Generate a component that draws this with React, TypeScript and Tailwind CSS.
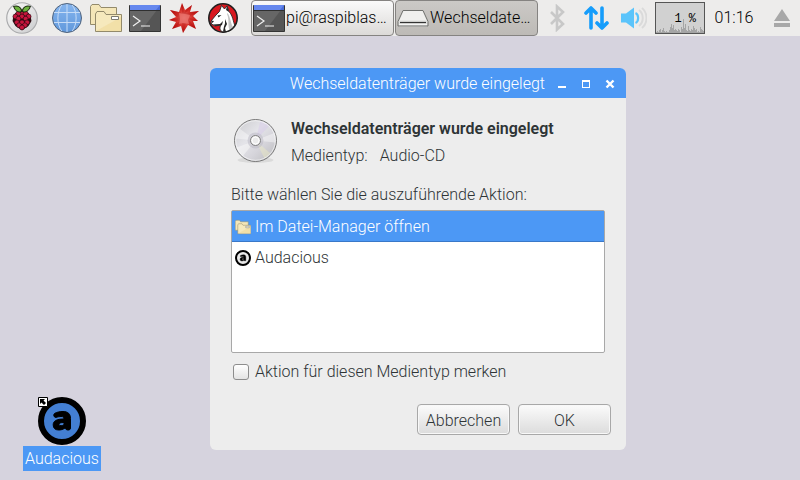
import { useState } from "react";
import type { ReactNode } from "react";

function RaspberryIcon() {
  const drupelets = [
    [22, 14], [17, 16], [27, 16], [13, 20], [22, 20], [31, 20], [17, 23], [27, 23], [15, 28], [22, 28], [29, 28], [18, 32], [26, 32], [22, 35],
  ];
  return (
    <svg viewBox="0 0 44 44" className="size-8" aria-hidden="true">
      <defs>
        <linearGradient id="menuDisc" x1="0" y1="0" x2="1" y2="1">
          <stop offset="0" stopColor="#fafafa" />
          <stop offset="0.5" stopColor="#e4e4e4" />
          <stop offset="1" stopColor="#c9cacc" />
        </linearGradient>
      </defs>
      <circle cx="22" cy="22" r="21" fill="url(#menuDisc)" stroke="#a9aaac" strokeWidth="1.6" />
      <path d="M22 13 31 15 34 20 35 26 31 33 22 39 13 33 9 26 10 20 13 15Z" fill="#2a0a10" />
      {drupelets.map(([cx, cy]) => (
        <circle key={`${cx}-${cy}`} cx={cx} cy={cy} r="3.4" fill="#c9143d" stroke="#2a0a10" strokeWidth="0.9" />
      ))}
      <path d="M21.5 13C17 15 12 12 10.500 6 15 4.500 21 6 21.500 13Z" fill="#6db33f" stroke="#1d2b12" strokeWidth="1.4" />
      <path d="M22.500 13C27 15 32 12 33.500 6 29 4.500 23 6 22.500 13Z" fill="#6db33f" stroke="#1d2b12" strokeWidth="1.4" />
    </svg>
  );
}

function GlobeIcon() {
  return (
    <svg viewBox="0 0 32 32" className="size-8" aria-hidden="true">
      <defs>
        <linearGradient id="globeFill" x1="0" y1="0" x2="0" y2="1">
          <stop offset="0" stopColor="#86b5ee" />
          <stop offset="1" stopColor="#6098dc" />
        </linearGradient>
      </defs>
      <circle cx="16" cy="16" r="14.500" fill="url(#globeFill)" />
      <path d="M2.500 10.500h27M2.500 20.500h27M16 1.500v29M11 2.500C5.500 10 5.500 22 11 29.500M21 2.500C26.500 10 26.500 22 21 29.500" fill="none" stroke="#c6dcf7" strokeWidth="1" />
      <circle cx="16" cy="16" r="14.500" fill="none" stroke="#52647c" strokeWidth="1" />
    </svg>
  );
}

function FoldersIcon({ className }: { className: string }) {
  return (
    <svg viewBox="0 0 32 32" className={className} aria-hidden="true">
      <path d="M.5 22.500V4.500L2 2.500H9L11 5.500H26.500V22.500Z" fill="#f4e6b8" stroke="#938a6b" />
      <path d="M5.500 29.500V12L7 9.500H14L16 12.500H31.500V29.500Z" fill="#f6e9bd" stroke="#938a6b" />
      <path d="M6 29 31 15V29Z" fill="#f1dca0" opacity=".7" />
      <path d="M21.500 14.500h7v3h-7z" fill="#fff" stroke="#7c7a70" />
    </svg>
  );
}

function TerminalIcon() {
  return (
    <svg viewBox="0 0 32 32" className="size-8 shrink-0" aria-hidden="true">
      <path d="M.5 3.500h31v26H.5z" fill="#555" stroke="#343434" />
      <path d="M1 4h30L12 29H1z" fill="#666" />
      <path d="M1 3h30v5H1z" fill="#4a6dd8" />
      <path d="M1 3h30l-4 5H1z" fill="#6688ee" />
      <path d="M1 8.500h30" stroke="#303030" />
      <path d="M4 14 11 19 4 24M12 24h9" fill="none" stroke="#f0f0f0" strokeWidth="1.200" />
    </svg>
  );
}

function SpikeyIcon() {
  return (
    <svg viewBox="0 0 32 32" className="size-8" aria-hidden="true">
      <defs>
        <radialGradient id="spikeFill">
          <stop offset="0" stopColor="#f0a39d" />
          <stop offset=".45" stopColor="#dc3c35" />
          <stop offset="1" stopColor="#b50808" />
        </radialGradient>
      </defs>
      <path d="M14 1 17 8 24 3 22 10 31 9 25 14 30 19 25 19 28 27 20 23 15 31 13 24 4 27 8 20 1 18 8 15 2 8 11 10Z" fill="url(#spikeFill)" />
      <path d="M14 1 14 11 2 8 10 16 1 18 11 19 4 27 14 21 15 31 18 21 28 27 21 18 30 19 20 15 31 9 18 11 24 3 16 10Z" fill="#a90c0c" opacity=".3" />
      <path d="m11 11 6 1 5 1-2 5 1 4-6-1-4 1 1-5Z" fill="#ee766f" opacity=".75" />
    </svg>
  );
}

function WolfIcon() {
  return (
    <svg viewBox="0 0 32 32" className="size-8" aria-hidden="true">
      <circle cx="16" cy="16" r="14.200" fill="#d8181f" />
      <path d="M14 23C12 26 13 29 16 30.200 22 30 26 27 28 24 26 19 26 14 22 9.500L20 4 17.500 7 14.500 3.500 12.500 9.500 9 13 4 19 4.500 22 8 24Z" fill="#fff" stroke="#272727" strokeWidth=".9" />
      <path d="m20 4 2 6-3-2ZM4 18.500l3 .5-1.500 2ZM6 22.500l7-.500 3-3-1 4-6.500 1ZM10.500 13.500l4-.500-3 2.500ZM18 17l2 5-2 4 1 4-3-.500 1-5 1-3Z" fill="#252525" />
      <path d="M20.500 11c3 4 3 10 5.500 14l-3.500 3c-2-5 0-11-2.500-16Z" fill="#c4c4c4" />
      <circle cx="16" cy="16" r="14.200" fill="none" stroke="#202020" strokeWidth="1.600" />
    </svg>
  );
}

function DriveIcon() {
  return (
    <svg viewBox="0 0 32 32" className="size-8 shrink-0" aria-hidden="true">
      <path d="M6 8h20l5 11v4l-1 2H2l-1-2v-4Z" fill="#dfdfdd" />
      <path d="M6.500 9h19l4 9.500h-27Z" fill="#f0f0ee" />
      <path d="M6 8.500h20l5 11v4.500H1V19.500Z" fill="none" stroke="#70716e" strokeLinejoin="round" />
      <path d="M3 20.500h26" stroke="#333" strokeWidth="1.200" />
      <path d="M2 22.500h28" stroke="#f4f4f4" />
    </svg>
  );
}

function DiscIcon() {
  return (
    <svg viewBox="0 0 48 48" className="size-12 shrink-0" aria-hidden="true">
      <defs>
        <linearGradient id="discFill" x1="0" y1="0" x2="1" y2="1">
          <stop offset="0" stopColor="#c9c9cc" />
          <stop offset=".4" stopColor="#e4e4e9" />
          <stop offset=".65" stopColor="#d5d4da" />
          <stop offset="1" stopColor="#b9b9bb" />
        </linearGradient>
      </defs>
      <ellipse cx="24.500" cy="43" rx="18" ry="3" fill="#000" opacity=".08" />
      <circle cx="24.500" cy="23.500" r="21" fill="url(#discFill)" stroke="#777" />
      <path d="m24.500 23.500 5-20 9 5Z" fill="#d4c8e8" opacity=".45" />
      <path d="m24.500 23.500-16-12-4 10Z" fill="#fff" opacity=".4" />
      <path d="m24.500 23.500 9 18 6-5Z" fill="#eeeac4" opacity=".45" />
      <path d="m24.500 23.500-19 7 6 9Z" fill="#fafafa" opacity=".5" />
      <path d="m24.500 23.500 20 2v-10Z" fill="#fff" opacity=".4" />
      <circle cx="24.500" cy="23.500" r="19.800" fill="none" stroke="#fff" opacity=".6" />
      <circle cx="24.500" cy="23.500" r="8" fill="#bbb9c5" opacity=".55" />
      <circle cx="24.500" cy="23.500" r="5" fill="#eee" stroke="#808080" />
      <circle cx="24.500" cy="23.500" r="3.500" fill="#ececec" stroke="#fff" />
    </svg>
  );
}

function AudaciousIcon({ className, face }: { className: string; face: string }) {
  return (
    <svg viewBox="0 0 48 48" className={className} aria-hidden="true">
      <circle cx="24" cy="24" r="21" fill={face} stroke="#000" strokeWidth="6" />
      <path
        fillRule="evenodd"
        stroke="#000"
        strokeLinejoin="round"
        d="M16.500 16.500C19 15 22 14.500 25 14.500 30 14.500 32.500 17 32.500 21.500V31C32.500 32.500 31.500 33 30 33 28.500 33 27.500 32 27 31 25 32.500 23 33 20.500 33 17 33 15.200 31 15.200 27.800 15.200 24 18.500 22 26 22 26 20 25 19.500 23 19.500 21 19.500 19 20 17.500 20.500 16 20 15 18 16.500 16.500ZM26 25.500C22.500 25.500 21 26.200 21 27.500 21 29.200 25 29 26 27.500Z"
      />
    </svg>
  );
}

function Launcher({ label, children }: { label: string; children: ReactNode }) {
  return (
    <button type="button" aria-label={label} className="shrink-0">
      {children}
    </button>
  );
}

function TaskButton({ active, label, icon }: { active?: boolean; label: string; icon: ReactNode }) {
  return (
    <button
      type="button"
      aria-pressed={!!active}
      className={`flex h-9 w-[143px] items-center rounded border border-[#858381] px-px text-left ${
        active ? "bg-linear-to-b from-[#cbc9c6] to-[#bdbab6]" : "bg-linear-to-b from-[#fafafa] to-[#dcdad8]"
      }`}
    >
      {icon}
      <span className="pl-px whitespace-nowrap text-black">{label}</span>
    </button>
  );
}

const cpuHistory = [1, 2, 1, 3, 4, 1, 3, 5, 2, 1, 2, 1, 1, 3, 6, 9, 5, 8, 3, 4, 3, 2, 4, 3, 1, 6, 4, 14, 5, 9, 3, 2, 7, 3, 2, 4, 3, 7, 5, 3, 4, 1, 2, 1, 6, 4, 3, 2];

function Taskbar() {
  return (
    <header className="flex h-9 items-center bg-[#edeceb] pl-1.5">
      <Launcher label="Menü"><RaspberryIcon /></Launcher>
      <nav aria-label="Schnellstarter" className="ml-[13px] flex items-center gap-[7px]">
        <Launcher label="Webbrowser"><GlobeIcon /></Launcher>
        <Launcher label="Datei-Manager"><FoldersIcon className="size-8" /></Launcher>
        <Launcher label="Terminal"><TerminalIcon /></Launcher>
        <Launcher label="Mathematica"><SpikeyIcon /></Launcher>
        <Launcher label="Wolfram"><WolfIcon /></Launcher>
      </nav>
      <div className="ml-3 flex gap-px">
        <TaskButton label="pi@raspiblas…" icon={<TerminalIcon />} />
        <TaskButton active label="Wechseldate…" icon={<DriveIcon />} />
      </div>
      <div className="ml-auto flex shrink-0 items-center pr-2.5">
        <button type="button" aria-label="Bluetooth">
          <svg viewBox="0 0 16 28" className="h-7 w-4" aria-hidden="true">
            <path d="M2 8 14 20 8 25.500V2.500L14 8 2 20" fill="none" stroke="#c8c8c8" strokeWidth="2.600" />
          </svg>
        </button>
        <button type="button" aria-label="Netzwerk" className="ml-4.5">
          <svg viewBox="0 0 26 28" className="h-7 w-6.5" aria-hidden="true">
            <path d="M8 24V4M3 9l5-5 5 5M19 4v20M14 19l5 5 5-5" fill="none" stroke="#169dfb" strokeWidth="3.600" strokeLinecap="round" strokeLinejoin="round" />
          </svg>
        </button>
        <button type="button" aria-label="Lautstärke" className="ml-3">
          <svg viewBox="0 0 26 24" className="h-6 w-6.5" aria-hidden="true">
            <path d="M0 7.500h5l8-6v21l-8-6H0Z" fill="#5bc4fb" />
            <path d="M14.500 7c3.500 1.500 3.500 8.500 0 10" fill="none" stroke="#5bc4fb" strokeWidth="2.200" />
            <path d="M18 4c5 4 5 12 0 16M21 2c6 5 6 15 0 20" fill="none" stroke="#dadada" strokeWidth="2" />
          </svg>
        </button>
        <div className="relative ml-2 h-8 w-12.5 border border-[#555] bg-[#d1d1d1]">
          <svg viewBox="0 0 48 30" className="size-full" aria-hidden="true">
            {cpuHistory.map((value, i) => (
              <rect key={i} x={i} y={30 - value} width="1" height={value} fill="#a5a5a5" />
            ))}
          </svg>
          <span className="absolute inset-y-0 right-2 flex items-center pt-0.5 font-['Liberation_Mono',monospace] text-xs font-normal whitespace-pre text-black">1 %</span>
        </div>
        <time className="ml-[9px] w-10 text-center whitespace-nowrap text-black">01:16</time>
        <button type="button" aria-label="Auswerfen" className="ml-5">
          <svg viewBox="0 0 16 18" className="h-4.5 w-4" aria-hidden="true">
            <path d="M8 0 16 12H0ZM0 14h16v4H0z" fill="#a8a8a8" />
          </svg>
        </button>
      </div>
    </header>
  );
}

function ActionDialog() {
  const [selected, setSelected] = useState(0);
  const actions = [
    { label: "Im Datei-Manager öffnen", icon: <FoldersIcon className="size-4" /> },
    { label: "Audacious", icon: <AudaciousIcon className="size-4" face="#e8e8e8" /> },
  ];
  const button = "h-[31px] w-[93px] rounded-sm border border-[#a8a8a8] bg-linear-to-b from-[#fbfbfb] to-[#dcdcdc] pt-0.5 shadow-[inset_0_0_0_1px_#f8f8f8]";
  return (
    <section role="dialog" aria-labelledby="dialog-title" className="absolute top-8 left-[210px] w-[416px] overflow-hidden rounded-md bg-[#ededed] text-[#2e3436]">
      <header className="flex h-[30px] items-center justify-end bg-[#4c98f5] pt-0.5 pr-1.5 text-white">
        <h1 id="dialog-title" className="mr-[11px]">Wechseldatenträger wurde eingelegt</h1>
        <div className="flex gap-2">
          <button type="button" aria-label="Minimieren">
            <svg viewBox="0 0 16 12" className="h-3 w-4" aria-hidden="true"><path d="M2 8h8v2H2z" fill="#fff" /></svg>
          </button>
          <button type="button" aria-label="Maximieren">
            <svg viewBox="0 0 16 12" className="h-3 w-4" aria-hidden="true"><path d="M2 2h8v8H2zM3 4v5h6V4z" fill="#fff" fillRule="evenodd" /></svg>
          </button>
          <button type="button" aria-label="Schließen">
            <svg viewBox="0 0 16 12" className="h-3 w-4" aria-hidden="true"><path d="m2.500 2.500 7 7m0-7-7 7" stroke="#fff" strokeWidth="2.400" /></svg>
          </button>
        </div>
      </header>
      <form className="px-[21px] pt-[19px] pb-[15px]" onSubmit={(e) => e.preventDefault()}>
        <div className="flex gap-3">
          <DiscIcon />
          <div>
            <h2 className="mb-[3px] font-semibold">Wechseldatenträger wurde eingelegt</h2>
            <p className="flex gap-3"><span>Medientyp:</span><span>Audio-CD</span></p>
          </div>
        </div>
        <p id="action-label" className="mt-[15px]">Bitte wählen Sie die auszuführende Aktion:</p>
        <div role="listbox" aria-labelledby="action-label" className="mt-[3px] h-[143px] rounded-xs border border-[#a8a8a8] bg-white">
          {actions.map(({ label, icon }, i) => (
            <button
              key={label}
              type="button"
              role="option"
              aria-selected={selected === i}
              onClick={() => setSelected(i)}
              className={`flex h-[31px] w-full items-center gap-1 border-b pt-0.5 pl-[3px] text-left ${
                selected === i ? "border-[#3a78c8] bg-[#4c98f5] text-white" : "border-transparent"
              }`}
            >
              {icon}
              <span>{label}</span>
            </button>
          ))}
        </div>
        <label className="mt-[7px] flex items-center gap-1.5 pl-0.5">
          <input type="checkbox" className="size-4 appearance-none rounded-[3px] border border-[#8d8d8d] bg-linear-to-b from-white to-[#e4e4e4] checked:bg-[#4c98f5]" />
          <span>Aktion für diesen Medientyp merken</span>
        </label>
        <div className="mt-5 -mr-1.5 flex justify-end gap-2">
          <button type="button" className={button}>Abbrechen</button>
          <button type="submit" className={button}>OK</button>
        </div>
      </form>
    </section>
  );
}

export default function App() {
  return (
    <div className="flex min-h-screen flex-col bg-[#d6d3de] font-[Roboto,'Noto_Sans',sans-serif] text-base font-light">
      <Taskbar />
      <main className="relative grow">
        <ActionDialog />
        <button type="button" className="absolute bottom-[9px] left-[23px] flex flex-col items-center gap-px">
          <span className="relative">
            <AudaciousIcon className="size-12" face="#437fd3" />
            <svg viewBox="0 0 10 10" className="absolute top-0 left-0 size-2.5" aria-hidden="true">
              <path d="M.5.5h9v9h-9z" fill="#fff" stroke="#000" />
              <path d="M2 2h5L5.500 3.500 8 6 6 8 3.500 5.500 2 7Z" />
            </svg>
          </span>
          <span className="bg-[#4c98f5] px-0.5 leading-[25px] text-white">Audacious</span>
        </button>
      </main>
    </div>
  );
}
